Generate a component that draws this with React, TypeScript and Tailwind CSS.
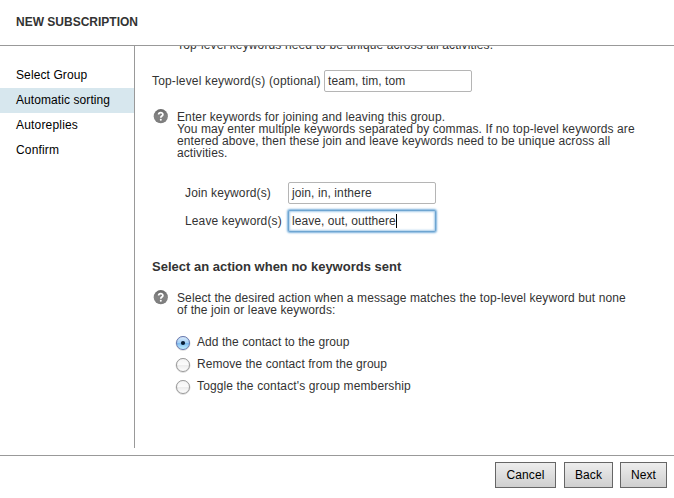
import type { ReactNode } from "react";

const steps = [
  { label: "Select Group", spacing: "tracking-[0.1px]" },
  { label: "Automatic sorting", spacing: "tracking-[0.08px]", active: true },
  { label: "Autoreplies", spacing: "tracking-[0.18px]" },
  { label: "Confirm", spacing: "tracking-[0.15px]" },
];

const actions = [
  { label: "Add the contact to the group", spacing: "tracking-[0.06px]", checked: true },
  { label: "Remove the contact from the group", spacing: "tracking-[0.06px]" },
  { label: "Toggle the contact's group membership", spacing: "tracking-[0.13px]" },
];

function HelpIcon() {
  return (
    <svg className="mt-[-2px] block h-[15px] w-[15px] shrink-0" viewBox="0 0 15 15">
      <defs>
        <linearGradient id="help" x1="0" y1="0" x2="0" y2="1">
          <stop offset="0" stopColor="#6a6a6a" />
          <stop offset="0.5" stopColor="#858585" />
          <stop offset="1" stopColor="#7c7c7c" />
        </linearGradient>
      </defs>
      <circle cx="7.8" cy="7.2" r="7.1" fill="url(#help)" />
      <path d="M5.6 5.5C5.7 3 10 3.1 9.9 5.5C9.9 7.1 7.8 6.9 7.8 8.7" fill="none" stroke="#fff" strokeWidth="1.7" />
      <circle cx="7.8" cy="10.7" r="1" fill="#fff" />
    </svg>
  );
}

function Radio({ checked }: { checked?: boolean }) {
  return (
    <svg className="block h-4 w-4 shrink-0" viewBox="0 0 16 16">
      <defs>
        <linearGradient id="radioOff" x1="0" y1="0" x2="0" y2="1">
          <stop offset="0" stopColor="#f4f4f4" />
          <stop offset="0.48" stopColor="#fbfbfb" />
          <stop offset="0.52" stopColor="#ececec" />
          <stop offset="1" stopColor="#fff" />
        </linearGradient>
        <linearGradient id="radioOn" x1="0" y1="0" x2="0" y2="1">
          <stop offset="0" stopColor="#dcecfb" />
          <stop offset="0.48" stopColor="#a4cff5" />
          <stop offset="0.52" stopColor="#7dbaf0" />
          <stop offset="1" stopColor="#c8f4ff" />
        </linearGradient>
      </defs>
      <circle cx="8" cy="8.4" r="7" fill="none" stroke="#000" strokeOpacity="0.14" />
      <circle cx="8" cy="8" r="6.5" fill={checked ? "url(#radioOn)" : "url(#radioOff)"} stroke={checked ? "#6577b0" : "#999"} />
      {checked && <circle cx="8" cy="8" r="2.1" fill="#071c33" />}
    </svg>
  );
}

function Field({ children, focused }: { children: ReactNode; focused?: boolean }) {
  return (
    <div
      className={
        "flex h-[22px] w-[148px] shrink-0 items-center rounded-[2px] border bg-white pl-[3px] " +
        (focused
          ? "border-[#6ea5d1] shadow-[0_0_2px_1px_#79b0dc,inset_0_0_2px_1px_#a9cdea]"
          : "border-[#b5b5b5]")
      }
    >
      {children}
    </div>
  );
}

function Button({ children, size }: { children: ReactNode; size: string }) {
  return (
    <button
      className={
        "flex h-[26px] items-center justify-center border border-[#666] bg-linear-to-b from-[#ededed] to-[#cfcfcf] text-black " + size
      }
    >
      {children}
    </button>
  );
}

export default function App() {
  return (
    <div className="flex h-[498px] w-[674px] flex-col overflow-hidden bg-white font-['Liberation_Sans',Arial,sans-serif] text-[12px] leading-3 whitespace-nowrap text-[#333]">
      <header className="h-[46px] shrink-0 border-b border-[#999] pt-4 pl-4 font-bold">
        <h1>NEW SUBSCRIPTION</h1>
      </header>
      <div className="flex h-[402px] shrink-0">
        <nav className="w-[135px] shrink-0 border-r border-[#999] pt-[17px] text-black">
          {steps.map((s) => (
            <div
              key={s.label}
              className={"h-[25px] pt-[6px] pl-4 " + s.spacing + (s.active ? " bg-[#d7e7ee]" : "")}
            >
              {s.label}
            </div>
          ))}
        </nav>
        <main className="flex-1 overflow-hidden pl-[17px] tracking-[0.1px]">
          <p className="mt-[-7px] pl-[25px] tracking-[0.135px]">Top-level keywords need to be unique across all activities.</p>
          <div className="mt-[19px] flex items-center">
            <label className="w-[172px] tracking-[0.17px]">Top-level keyword(s) (optional)</label>
            <Field>team, tim, tom</Field>
          </div>
          <div className="mt-[19px] flex gap-[9px] pl-[1px]">
            <HelpIcon />
            <p>
              <span className="tracking-[0.12px]">Enter keywords for joining and leaving this group.</span>
              <br />
              <span className="tracking-[0.09px]">You may enter multiple keywords separated by commas. If no top-level keywords are</span>
              <br />
              <span className="tracking-[0.115px]">entered above, then these join and leave keywords need to be unique across all</span>
              <br />
              activities.
            </p>
          </div>
          <div className="mt-[23px] flex items-center pl-[33px]">
            <label className="w-[103px] tracking-[0.13px]">Join keyword(s)</label>
            <Field>join, in, inthere</Field>
          </div>
          <div className="mt-[6px] flex items-center pl-[33px]">
            <label className="w-[103px] tracking-[0.13px]">Leave keyword(s)</label>
            <Field focused>
              <span className="tracking-[0.05px]">leave, out, outthere</span>
              <span className="h-[14px] w-px bg-black" />
            </Field>
          </div>
          <h2 className="mt-[29px] text-[13px] leading-3 font-bold tracking-normal">Select an action when no keywords sent</h2>
          <div className="mt-[19px] flex gap-[9px] pl-[1px]">
            <HelpIcon />
            <p>
              Select the desired action when a message matches the top-level keyword but none
              <br />
              of the join or leave keywords:
            </p>
          </div>
          <div className="mt-[17px] pl-[23px]">
            {actions.map((a) => (
              <label key={a.label} className={"flex h-[22px] items-start gap-[6px] " + a.spacing}>
                <span className="pt-[2px]">
                  <Radio checked={a.checked} />
                </span>
                <span className="pt-[3px]">{a.label}</span>
              </label>
            ))}
          </div>
        </main>
      </div>
      <footer className="mt-[7px] flex h-[43px] shrink-0 border-t border-[#999] pt-[6px] pl-[495px] tracking-[0.12px]">
        <Button size="w-[61px]">Cancel</Button>
        <Button size="ml-2 w-[49px]">Back</Button>
        <Button size="ml-[7px] w-[47px]">Next</Button>
      </footer>
    </div>
  );
}
